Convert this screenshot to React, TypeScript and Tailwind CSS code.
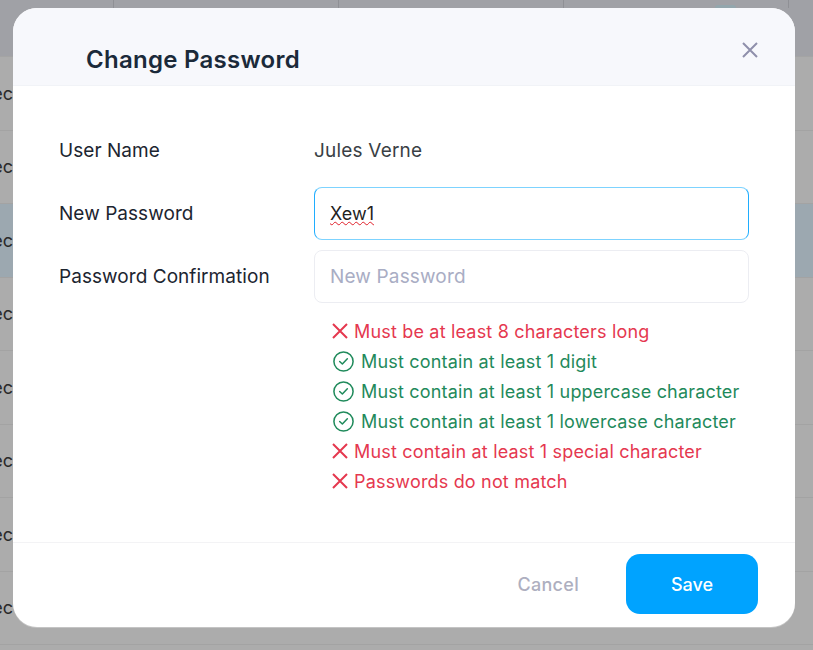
import React from 'react';

const rows = [false, false, true, false, false, false, false, false];

const rules = [
  { ok: false, text: 'Must be at least 8 characters long' },
  { ok: true, text: 'Must contain at least 1 digit' },
  { ok: true, text: 'Must contain at least 1 uppercase character' },
  { ok: true, text: 'Must contain at least 1 lowercase character' },
  { ok: false, text: 'Must contain at least 1 special character' },
  { ok: false, text: 'Passwords do not match' },
];

const Cross: React.FC<{ className?: string }> = ({ className }) => (
  <svg viewBox="0 0 16 16" fill="none" stroke="currentColor" strokeWidth={2} className={className}>
    <path d="M1 1L15 15M15 1L1 15" />
  </svg>
);

const Check: React.FC<{ className?: string }> = ({ className }) => (
  <svg viewBox="0 0 24 24" fill="none" stroke="currentColor" strokeWidth={1.6} strokeLinecap="round" strokeLinejoin="round" className={className}>
    <circle cx="12" cy="12" r="10" />
    <path d="M8 12l2.8 2.6 5.2-5.4" />
  </svg>
);

const App: React.FC = () => {
  return (
    <div className="relative h-[650px] w-[813px] overflow-hidden bg-[#acacac] font-['Inter',sans-serif]">
      {/* Table behind the overlay */}
      <div className="flex h-[57px] border-b border-[#a4a4a4] bg-[#a0a1a6]">
        <div className="h-[8px] w-[114px] border-r border-[#8f9095]" />
        <div className="h-[8px] w-[225px] border-r border-[#8f9095]" />
        <div className="h-[8px] w-[225px] border-r border-[#8f9095]" />
        <div className="h-[8px] w-[225px] border-r border-[#8f9095] pl-[151px] pt-[5px]">
          <div className="h-[3px] w-[21px] rounded-t-full bg-[#93a6ad]" />
        </div>
      </div>
      {rows.map((selected, i) => (
        <div
          key={i}
          className={`flex h-[73.5px] items-center justify-end border-b border-[#a3a3a3] ${selected ? 'bg-[#9ca8b0]' : 'bg-[#acacac]'}`}
        >
          <span className="mr-[800px] whitespace-nowrap text-[18px] text-[#2a2a2a]">ec</span>
        </div>
      ))}

      {/* Modal */}
      <div className="absolute left-[13px] top-[8px] flex h-[619px] w-[782px] flex-col overflow-hidden rounded-[24px] bg-white text-[#1c2530] shadow-[0_1px_0_#c4c4c4]">
        <div className="flex h-[78px] shrink-0 items-start justify-between border-b border-[#f1f3f7] bg-[#f7f8fc] pl-[73px] pr-[37px] pt-[34px]">
          <h2 className="text-[24px] font-semibold tracking-[0.27px] text-[#1b2a3a]">Change Password</h2>
          <Cross className="h-4 w-4 text-[#8f90ab]" />
        </div>

        <div className="flex flex-1 flex-col pl-[46px] pr-[46px] pt-[38px]">
          <div className="grid grid-cols-[255px_435px] items-center gap-y-[10px]">
            <div className="pt-[2px] text-[19px] tracking-[0.05px]">User Name</div>
            <div className="flex h-[53px] items-center pt-[2px] text-[19px] tracking-[0.2px] text-[#3a3f45]">Jules Verne</div>
            <div className="pt-[2px] text-[19px] tracking-[0.05px]">New Password</div>
            <div className="flex h-[53px] items-center rounded-[8px] border border-x-[#1fadff] border-y-[#7dd3ff] px-[15px] text-[18px] text-[#1f1f1f]">
              <span className="underline decoration-wavy decoration-[#e0202a] decoration-1">Xew1</span>
            </div>
            <div className="pt-[2px] text-[19px] tracking-[0.05px]">Password Confirmation</div>
            <div className="flex h-[53px] items-center rounded-[8px] border border-[#ecedf2] px-[15px] pt-[2px] text-[19px] tracking-[0.15px] text-[#a9adc4]">
              New Password
            </div>
          </div>
          <ul className="ml-[271px] mt-[13px] flex flex-col">
            {rules.map((r) => (
              <li
                key={r.text}
                className={`flex h-[30px] items-center text-[18px] tracking-[0.18px] ${r.ok ? 'text-[#1f8a5b]' : 'text-[#e5384f]'}`}
              >
                {r.ok ? (
                  <Check className="ml-[2px] mr-[6px] h-[23px] w-[23px]" />
                ) : (
                  <Cross className="ml-[2px] mr-[6px] h-4 w-4" />
                )}
                <span>{r.text}</span>
              </li>
            ))}
          </ul>
        </div>

        <div className="flex h-[85px] shrink-0 items-center justify-end gap-[47px] border-t border-[#f3f3f5] pb-[2px] pr-[37px]">
          <button className="text-[18px] font-medium tracking-[0.3px] text-[#aeafbf]">Cancel</button>
          <button className="h-[60px] w-[132px] rounded-[14px] bg-[#00a3ff] text-[18px] font-medium text-white">Save</button>
        </div>
      </div>
    </div>
  );
};

export default App;
